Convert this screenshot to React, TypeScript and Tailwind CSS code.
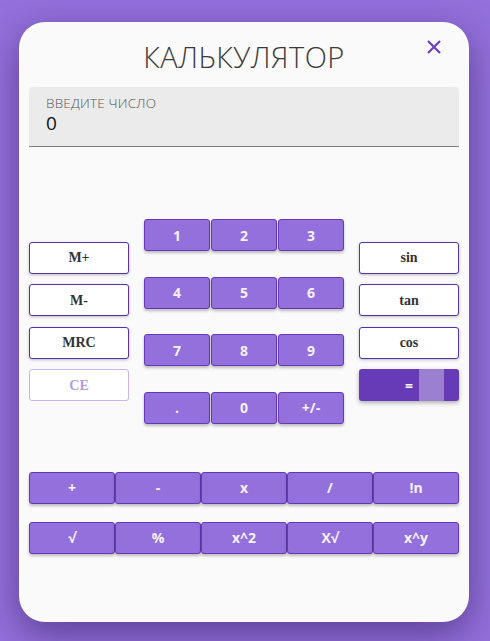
import React from "react";

const LEFT = [
  { label: "M+", disabled: false },
  { label: "M-", disabled: false },
  { label: "MRC", disabled: false },
  { label: "CE", disabled: true },
];

const DIGITS = [
  ["1", "2", "3"],
  ["4", "5", "6"],
  ["7", "8", "9"],
  [".", "0", "+/-"],
];

const RIGHT = ["sin", "tan", "cos"];

const OPS = [
  ["+", "-", "x", "/", "!n"],
  ["√", "%", "x^2", "X√", "x^y"],
];

function PurpleButton({ label, className }: { label: string; className: string }) {
  return (
    <button className={`h-[32px] bg-[#9370db] border border-[#6438b8] rounded-[3px] text-[#f6f1ff] text-[14px] font-bold shadow-[0_2px_3px_rgba(0,0,0,0.25)] flex items-center justify-center ${className}`}>
      {label}
    </button>
  );
}

function OutlineButton({ label, disabled }: { label: string; disabled?: boolean }) {
  return (
    <button
      className={`h-[32px] w-[100px] rounded-[3px] bg-white text-[14px] font-bold flex items-center justify-center ${
        disabled
          ? "border border-[#c8b3ef] text-[#b49be6]"
          : "border border-[#5b30b0] text-[#333333] shadow-[0_1px_3px_rgba(0,0,0,0.25)]"
      }`}
      style={{ fontFamily: '"Liberation Serif", "DejaVu Serif", serif' }}
    >
      {label}
    </button>
  );
}

export default function App() {
  return (
    <div
      className="w-[490px] h-[641px] bg-[#9370db] flex pl-[19px] pt-[22px]"
      style={{ fontFamily: '"Open Sans", "Noto Sans", sans-serif' }}
    >
      <div className="w-[450px] h-[600px] bg-[#fafafa] rounded-[26px] shadow-[0_12px_36px_rgba(40,15,80,0.5)] px-[10px] flex flex-col">
        {/* Header */}
        <div className="relative h-[65px] flex items-center justify-center">
          <h1 className="text-[29px] font-light text-[#3a3a3a] tracking-[0.5px] leading-none mt-[4px]">
            КАЛЬКУЛЯТОР
          </h1>
          <button className="absolute right-[17px] top-[17px] w-[16px] h-[16px] flex items-center justify-center">
            <svg width="14" height="14" viewBox="0 0 14 14">
              <path d="M1 1 L13 13 M13 1 L1 13" stroke="#6a3fc2" strokeWidth="2.2" />
            </svg>
          </button>
        </div>

        {/* Input */}
        <div className="h-[60px] bg-[#ebebeb] rounded-t-[4px] border-b border-[#7d7d7d] px-[17px] pt-[8px]">
          <div className="text-[13.5px] font-light text-[#555555] leading-[16px] tracking-[0.2px]">ВВЕДИТЕ ЧИСЛО</div>
          <div className="text-[19px] text-[#111111] leading-[24px]">0</div>
        </div>

        {/* Middle */}
        <div className="mt-[72px] flex items-center gap-[15px]">
          <div className="flex flex-col gap-[10.5px]">
            {LEFT.map((b) => (
              <OutlineButton key={b.label} label={b.label} disabled={b.disabled} />
            ))}
          </div>
          <div className="w-[200px] flex flex-col gap-[25.5px]">
            {DIGITS.map((row, i) => (
              <div key={i} className="flex gap-[1px]">
                {row.map((d) => (
                  <PurpleButton key={d} label={d} className="w-[66px]" />
                ))}
              </div>
            ))}
          </div>
          <div className="flex flex-col gap-[10.5px]">
            {RIGHT.map((r) => (
              <OutlineButton key={r} label={r} />
            ))}
            <button className="relative h-[32px] w-[100px] rounded-[3px] bg-[#673ab7] text-white text-[14px] font-bold shadow-[0_2px_4px_rgba(0,0,0,0.3)] flex items-center justify-center overflow-hidden">
              <span>=</span>
              <span className="absolute left-[60px] top-0 h-full w-[25px] bg-[#9b7fd0]" />
            </button>
          </div>
        </div>

        {/* Operators */}
        <div className="mt-[48px] flex flex-col gap-[18px]">
          {OPS.map((row, i) => (
            <div key={i} className="flex">
              {row.map((o) => (
                <PurpleButton key={o} label={o} className="w-[86px]" />
              ))}
            </div>
          ))}
        </div>
      </div>
    </div>
  );
}
